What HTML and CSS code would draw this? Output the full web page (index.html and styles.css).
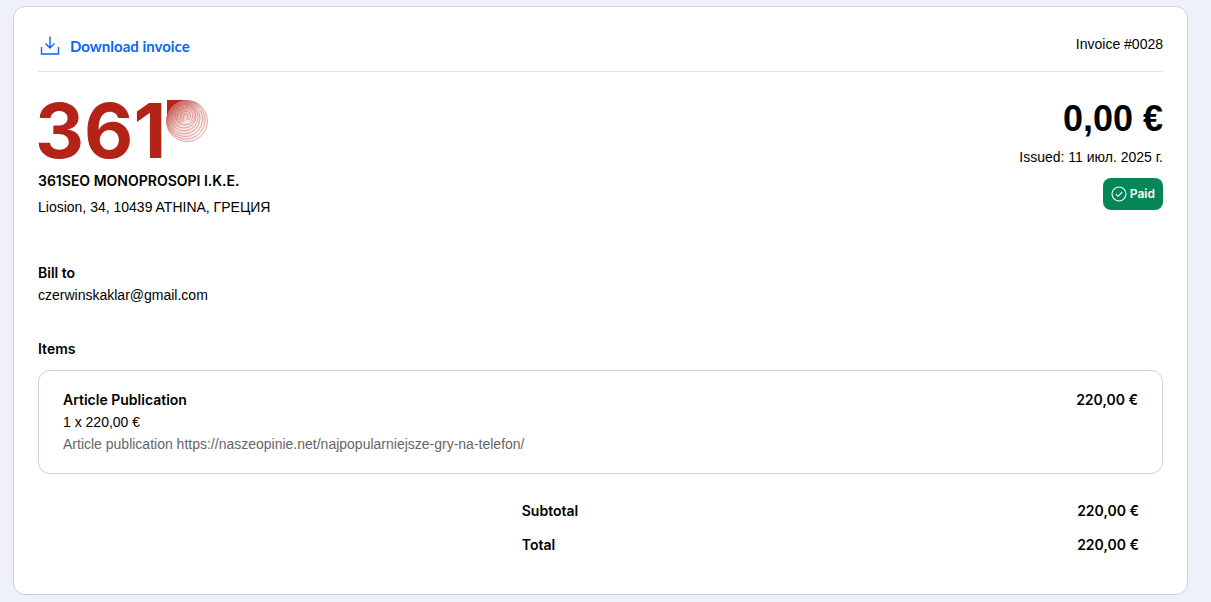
FILE: index.html
```html
<!DOCTYPE html>
<html lang="en">
<head>
<meta charset="UTF-8">
<meta name="viewport" content="width=device-width, initial-scale=1.0">
<title>Invoice #0028</title>
<link rel="stylesheet" href="styles.css">
</head>
<body>

<main class="invoice">
    <header class="toolbar">
        <a class="download" href="#">
            <svg width="20" height="20" viewBox="0 0 20 20" fill="none" stroke="currentColor" stroke-width="1.4">
                <path d="M10 0.5V12M5.5 7.5L10 12L14.5 7.5M1.5 11V18H18.5V11"/>
            </svg>
            Download invoice
        </a>
        <span class="number">Invoice #0028</span>
    </header>

    <section class="summary">
        <div class="seller">
            <svg class="logo" width="172" height="64" viewBox="0 0 172 64" role="img" aria-label="361">
                <defs>
                    <linearGradient id="fade" x1="0" y1="0" x2="1" y2="1">
                        <stop offset="0.1" stop-color="#b32317"/>
                        <stop offset="0.25" stop-color="#c0392e" stop-opacity="0.6"/>
                        <stop offset="0.5" stop-color="#c0392e" stop-opacity="0.15"/>
                        <stop offset="1" stop-color="#c0392e" stop-opacity="0"/>
                    </linearGradient>
                    <clipPath id="print"><circle cx="149" cy="23" r="21"/></clipPath>
                </defs>
                <text class="logo-text" x="-3" y="60">361</text>
                <path fill="#b32317" d="M129 2H149V23H129Z"/>
                <circle cx="150" cy="23" r="21" fill="#fff"/>
                <circle cx="149" cy="23" r="21" fill="url(#fade)"/>
                <g clip-path="url(#print)" fill="none" stroke="#cf7069" stroke-width="0.6">
                    <circle cx="149" cy="23" r="20.5"/>
                    <circle cx="148" cy="22" r="19"/>
                    <circle cx="147" cy="21" r="17.5"/>
                    <circle cx="146" cy="20" r="16"/>
                    <circle cx="146" cy="19" r="14"/>
                    <circle cx="146" cy="18" r="12"/>
                    <circle cx="147" cy="17" r="10"/>
                    <path d="M139 22C139 14 143 9 149 10S156 18 153 23M142 24C142 18 143 13 148 13S153 19 151 22M145 24C145 20 145 16 148 16S150 20 149 22"/>
                    <path d="M136 8L142 12M141 6L146 11M147 5L150 10M133 14L139 17"/>
                </g>
            </svg>
            <h2>361SEO MONOPROSOPI I.K.E.</h2>
            <p>Liosion, 34, 10439 ATHINA, ГРЕЦИЯ</p>
        </div>
        <div class="due">
            <div class="amount">0,00 €</div>
            <p>Issued: 11 июл. 2025 г.</p>
            <span class="badge">
                <svg width="16" height="16" viewBox="0 0 16 16" fill="none" stroke="currentColor" stroke-width="1.1">
                    <circle cx="8" cy="8" r="7"/>
                    <path d="M4.8 8.2L7 10.3L11.2 6"/>
                </svg>
                Paid
            </span>
        </div>
    </section>

    <section class="bill-to">
        <h3>Bill to</h3>
        <p>czerwinskaklar@gmail.com</p>
    </section>

    <section class="items">
        <h3>Items</h3>
        <div class="item">
            <div>
                <h4>Article Publication</h4>
                <p>1 x 220,00 €</p>
                <p class="note">Article publication https://naszeopinie.net/najpopularniejsze-gry-na-telefon/</p>
            </div>
            <strong>220,00 €</strong>
        </div>
    </section>

    <table class="totals">
        <tr>
            <th scope="row">Subtotal</th>
            <td>220,00 €</td>
        </tr>
        <tr>
            <th scope="row">Total</th>
            <td>220,00 €</td>
        </tr>
    </table>
</main>

</body>
</html>
```
FILE: styles.css
```css
* {
    box-sizing: border-box;
}
body {
    margin: 0;
    padding: 6px 23px 7px 13px;
    background-color: #eef1fa;
    color: #000;
    font-family: "Liberation Sans", Arial, sans-serif;
    font-size: 14px;
    line-height: 22px;
}
h2, h3, h4, p {
    margin: 0;
    font-size: 14px;
}
h2, h3, h4, strong {
    font-family: Inter, sans-serif;
    font-weight: 600;
}
.invoice {
    padding: 24px 24px 32px;
    background-color: #fff;
    border: 1px solid #cdd0d6;
    border-radius: 12px;
}
.toolbar {
    display: flex;
    justify-content: space-between;
    padding-bottom: 14px;
    border-bottom: 1px solid #e2e3e5;
}
.download {
    display: flex;
    align-items: center;
    gap: 10px;
    padding: 4px 0 0 2px;
    color: #0a66f5;
    font-family: Lato, sans-serif;
    font-size: 15px;
    font-weight: 700;
    text-decoration: none;
}
.number {
    padding-top: 2px;
}
.summary {
    display: flex;
    justify-content: space-between;
    padding-top: 26px;
}
.logo {
    display: block;
    margin-bottom: 8px;
    overflow: visible;
}
.logo-text {
    fill: #b32317;
    font-family: Inter, sans-serif;
    font-size: 76px;
    font-weight: 700;
}
.seller p {
    margin-top: 4px;
}
.due {
    display: flex;
    flex-direction: column;
    align-items: flex-end;
}
.amount {
    font-size: 36px;
    font-weight: 700;
    line-height: 42px;
}
.due p {
    margin: 6px 0 10px;
}
.badge {
    display: flex;
    align-items: center;
    gap: 3px;
    height: 32px;
    padding: 0 8px;
    background-color: #048657;
    border-radius: 8px;
    color: #fff;
    font-family: Inter, sans-serif;
    font-size: 12px;
    font-weight: 600;
}
.bill-to {
    margin-top: 44px;
}
.items {
    margin-top: 32px;
}
.item {
    display: flex;
    justify-content: space-between;
    margin-top: 10px;
    padding: 18px 24px;
    border: 1px solid #cdd0d6;
    border-radius: 12px;
}
.note {
    color: #666;
}
.totals {
    width: 57%;
    margin: 20px 0 0 auto;
    border-collapse: collapse;
}
.totals th,
.totals td {
    padding: 6px 0;
    font-family: Inter, sans-serif;
    font-weight: 600;
    text-align: left;
}
.totals td {
    padding-right: 24px;
    text-align: right;
}
```
